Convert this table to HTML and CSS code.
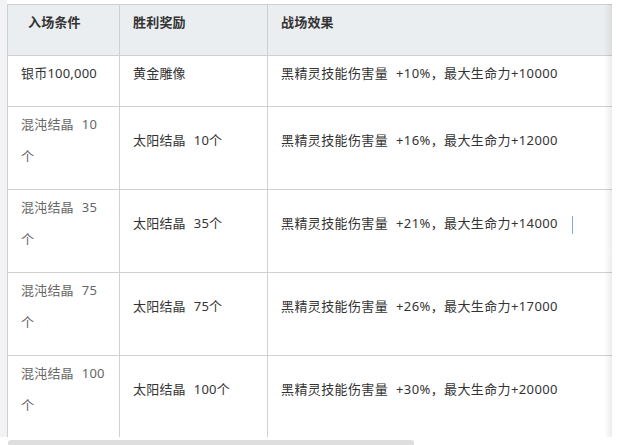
FILE: index.html
```html
<!DOCTYPE html>
<html lang="zh">
<head>
<meta charset="utf-8">
<link rel="stylesheet" href="styles.css">
</head>
<body>
<div class="page">
  <div class="side"></div>
  <div class="scroller">
    <div class="viewport">
      <table class="grid">
        <colgroup>
          <col class="c1"><col class="c2"><col class="c3">
        </colgroup>
        <thead>
          <tr>
            <th class="first-head"><p>入场条件</p></th>
            <th><p>胜利奖励</p></th>
            <th><p>战场效果</p></th>
          </tr>
        </thead>
        <tbody>
          <tr>
            <td><p>银币100,000</p></td>
            <td><p>黄金雕像</p></td>
            <td class="effect"><p>黑精灵技能伤害量<span class="gap"></span>+10%，最大生命力+10000</p></td>
          </tr>
          <tr>
            <td class="muted"><p>混沌结晶<span class="gap"></span>10<br>个</p></td>
            <td><p>太阳结晶<span class="gap"></span>10个</p></td>
            <td class="effect"><p>黑精灵技能伤害量<span class="gap"></span>+16%，最大生命力+12000</p></td>
          </tr>
          <tr>
            <td class="muted"><p>混沌结晶<span class="gap"></span>35<br>个</p></td>
            <td><p>太阳结晶<span class="gap"></span>35个</p></td>
            <td class="effect"><p>黑精灵技能伤害量<span class="gap"></span>+21%，最大生命力+14000<span class="caret"></span></p></td>
          </tr>
          <tr>
            <td class="muted"><p>混沌结晶<span class="gap"></span>75<br>个</p></td>
            <td><p>太阳结晶<span class="gap"></span>75个</p></td>
            <td class="effect"><p>黑精灵技能伤害量<span class="gap"></span>+26%，最大生命力+17000</p></td>
          </tr>
          <tr>
            <td class="muted"><p>混沌结晶<span class="gap"></span>100<br>个</p></td>
            <td><p>太阳结晶<span class="gap"></span>100个</p></td>
            <td class="effect"><p>黑精灵技能伤害量<span class="gap"></span>+30%，最大生命力+20000</p></td>
          </tr>
        </tbody>
      </table>
      <div class="shade"></div>
    </div>
    <div class="hbar"><div class="thumb"></div></div>
  </div>
</div>
</body>
</html>
```

FILE: styles.css
```css
html, body {
  margin: 0;
  padding: 0;
  background: #ffffff;
}
body {
  font-family: "Noto Sans", "Noto Sans CJK SC", sans-serif;
  font-size: 13px;
  color: #333333;
  width: 617px;
  height: 445px;
  overflow: hidden;
}
.page {
  display: flex;
  height: 445px;
}
.side {
  width: 7px;
  height: 437px;
  flex: none;
  background: #f2f3f4;
}
.scroller {
  width: 605px;
  flex: none;
  display: flex;
  flex-direction: column;
  padding-top: 4px;
}
.viewport {
  position: relative;
  overflow: hidden;
  width: 605px;
}
.grid {
  border-collapse: collapse;
  table-layout: fixed;
  width: 904px;
}
.c1 { width: 112px; }
.c2 { width: 148px; }
.c3 { width: 644px; }
.grid th,
.grid td {
  border: 1px solid #d0d0d0;
  padding: 1px 13px;
  vertical-align: middle;
  text-align: left;
}
.grid th {
  background: #ebeef0;
  font-weight: bold;
  color: #333333;
}
.grid th.first-head {
  padding-left: 20px;
}
.grid p {
  margin: 0 0 16px;
  line-height: 32px;
  white-space: nowrap;
  letter-spacing: 0.2px;
}
.grid td.effect p {
  letter-spacing: 0.38px;
}
.gap {
  display: inline-block;
  width: 8px;
}
.grid td.muted {
  color: #666666;
}
.caret {
  display: inline-block;
  width: 1px;
  height: 18px;
  margin-left: 14px;
  background: #7ea9f2;
  vertical-align: middle;
}
.shade {
  position: absolute;
  top: 0;
  right: 0;
  width: 8px;
  height: 100%;
  background: linear-gradient(to right, rgba(0,0,0,0), rgba(0,0,0,0.07));
}
.hbar {
  margin-top: 3px;
  height: 5px;
  width: 605px;
}
.thumb {
  width: 406px;
  height: 5px;
  margin-left: 1px;
  background: #dedede;
  border-radius: 3px 3px 0 0;
}
```
